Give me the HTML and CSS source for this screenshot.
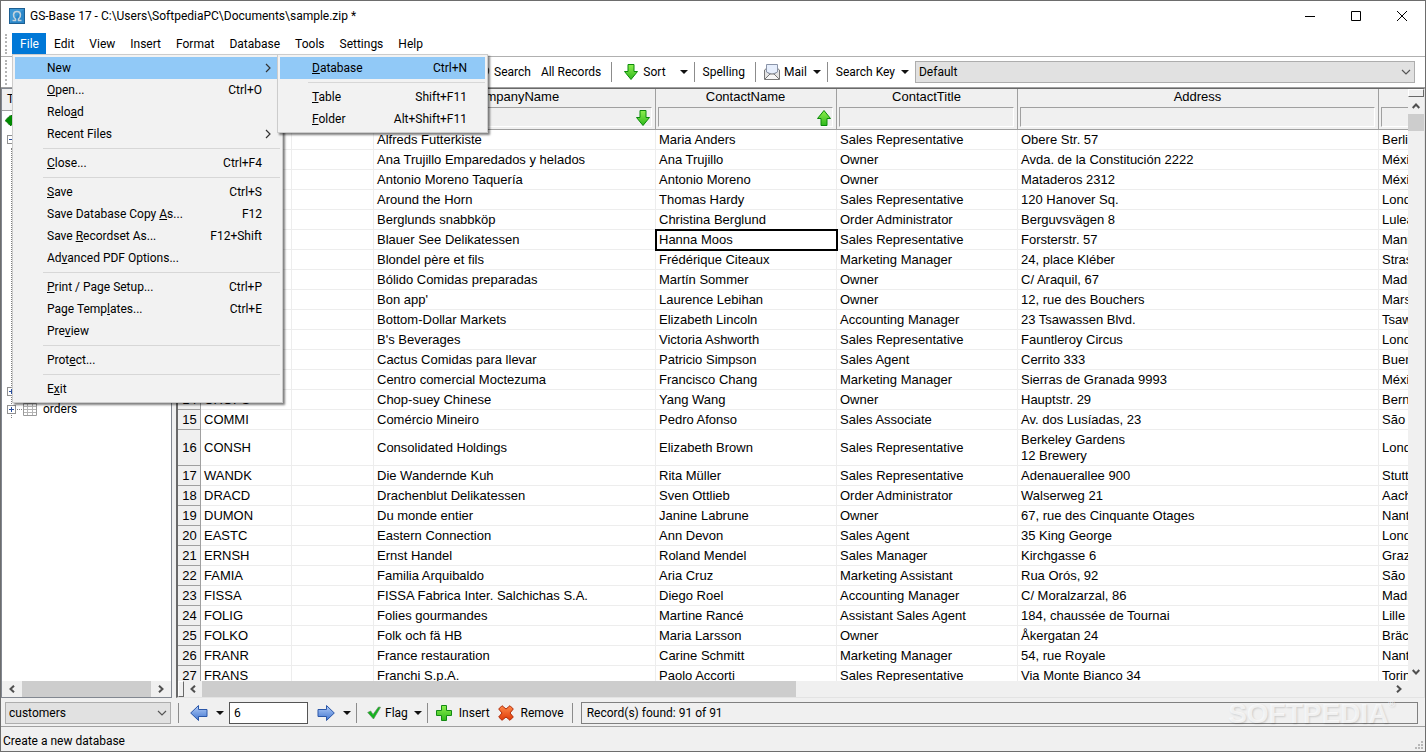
FILE: index.html
```html
<!DOCTYPE html>
<html lang="en">
<head>
  <meta charset="UTF-8" />
  <meta name="viewport" content="width=device-width, initial-scale=1" />
  <title>GS-Base 17</title>
  <link rel="stylesheet" href="styles.css">
</head>
<body>

  <!-- shared icons -->
  <svg class="defs" width="0" height="0" aria-hidden="true">
    <defs>
      <linearGradient id="green" x1="0" y1="0" x2="0" y2="1">
        <stop offset="0" stop-color="#8df04e"/><stop offset="1" stop-color="#2fb81c"/>
      </linearGradient>
      <linearGradient id="blue" x1="0" y1="0" x2="0" y2="1">
        <stop offset="0" stop-color="#b3cdf8"/><stop offset="1" stop-color="#3f74cf"/>
      </linearGradient>
      <linearGradient id="red" x1="0" y1="0" x2="0" y2="1">
        <stop offset="0" stop-color="#ff8a4a"/><stop offset="1" stop-color="#e03a06"/>
      </linearGradient>
    </defs>
    <symbol id="arrow-down" viewBox="0 0 16 16">
      <path d="M5 .5h6v7h3.5L8 15.500 1.500 7.500H5z" fill="url(#green)" stroke="#0a8a0a"/>
    </symbol>
    <symbol id="arrow-up" viewBox="0 0 16 16">
      <path d="M5 15.500h6v-7h3.500L8 .5 1.500 8.500H5z" fill="url(#green)" stroke="#0a8a0a"/>
    </symbol>
    <symbol id="caret" viewBox="0 0 8 4"><path d="M0 0h8L4 4z" fill="#111"/></symbol>
    <symbol id="chev-down" viewBox="0 0 10 6"><path d="M1 1l4 4 4-4" fill="none" stroke="#555" stroke-width="1.2"/></symbol>
    <symbol id="chev-right" viewBox="0 0 6 10"><path d="M1 1l4 4-4 4" fill="none" stroke="#333" stroke-width="1.2"/></symbol>
    <symbol id="sb-left" viewBox="0 0 8 8"><path d="M6 .7L2.500 4 6 7.300" fill="none" stroke="#505050" stroke-width="2"/></symbol>
    <symbol id="sb-right" viewBox="0 0 8 8"><path d="M2 .7L5.500 4 2 7.300" fill="none" stroke="#505050" stroke-width="2"/></symbol>
    <symbol id="sb-up" viewBox="0 0 8 8"><path d="M.7 6L4 2.500 7.300 6" fill="none" stroke="#505050" stroke-width="2"/></symbol>
    <symbol id="sb-down" viewBox="0 0 8 8"><path d="M.7 2L4 5.500 7.300 2" fill="none" stroke="#505050" stroke-width="2"/></symbol>
    <symbol id="sheet" viewBox="0 0 14 13">
      <path d="M.5.5h13v12H.5z" fill="#fff" stroke="#9a9a9a"/>
      <path d="M1 3.500h12M1 6.500h12M1 9.500h12M4.500 1v11M9.500 1v11" stroke="#b4b4b4"/>
    </symbol>
  </svg>

  <div class="window">
    <header class="titlebar">
      <svg class="app-icon" width="16" height="16" viewBox="0 0 16 16">
        <rect x=".5" y=".5" width="15" height="15" fill="#2a86c8" stroke="#1d5f92"/>
        <path d="M1 1h14L1 15z" fill="#4aa3dc" opacity=".6"/>
        <path d="M3.500 12.500h3v-1.500C3.500 8.500 3.800 3.500 8 3.500s4.500 5 1.500 7.500v1.500h3" fill="none" stroke="#c3d3dd" stroke-width="1.600"/>
      </svg>
      <span class="caption">GS-Base 17 - C:\Users\SoftpediaPC\Documents\sample.zip *</span>
      <button class="win-btn" aria-label="Minimize"><svg width="10" height="10"><path d="M0 5.500h10" stroke="#000"/></svg></button>
      <button class="win-btn" aria-label="Maximize"><svg width="10" height="10"><path d="M.5.5h9v9h-9z" fill="none" stroke="#000"/></svg></button>
      <button class="win-btn" aria-label="Close"><svg width="10" height="10"><path d="M0 0l10 10M10 0L0 10" stroke="#000"/></svg></button>
    </header>

    <nav class="menubar">
      <div class="menu-root">
        <button class="open">File</button>
        <div class="popup file-menu">
          <button class="item selected"><span>New</span><svg width="6" height="10"><use href="#chev-right"/></svg></button>
          <button class="item"><span><u>O</u>pen...</span><kbd>Ctrl+O</kbd></button>
          <button class="item"><span>Relo<u>a</u>d</span></button>
          <button class="item"><span>Recent Files</span><svg width="6" height="10"><use href="#chev-right"/></svg></button>
          <hr>
          <button class="item"><span><u>C</u>lose...</span><kbd>Ctrl+F4</kbd></button>
          <hr>
          <button class="item"><span><u>S</u>ave</span><kbd>Ctrl+S</kbd></button>
          <button class="item"><span>Save Database Copy <u>A</u>s...</span><kbd>F12</kbd></button>
          <button class="item"><span>Save <u>R</u>ecordset As...</span><kbd>F12+Shift</kbd></button>
          <button class="item"><span>Ad<u>v</u>anced PDF Options...</span></button>
          <hr>
          <button class="item"><span><u>P</u>rint / Page Setup...</span><kbd>Ctrl+P</kbd></button>
          <button class="item"><span>Page Temp<u>l</u>ates...</span><kbd>Ctrl+E</kbd></button>
          <button class="item"><span>Pre<u>v</u>iew</span></button>
          <hr>
          <button class="item"><span>Prot<u>e</u>ct...</span></button>
          <hr>
          <button class="item"><span>E<u>x</u>it</span></button>
        </div>
        <div class="popup new-menu">
          <button class="item selected"><span><u>D</u>atabase</span><kbd>Ctrl+N</kbd></button>
          <hr>
          <button class="item"><span><u>T</u>able</span><kbd>Shift+F11</kbd></button>
          <button class="item"><span><u>F</u>older</span><kbd>Alt+Shift+F11</kbd></button>
        </div>
      </div>
      <button>Edit</button>
      <button>View</button>
      <button>Insert</button>
      <button>Format</button>
      <button>Database</button>
      <button>Tools</button>
      <button>Settings</button>
      <button>Help</button>
    </nav>

    <div class="toolbar">
      <button class="search"><svg width="16" height="16" viewBox="0 0 16 16"><circle cx="9" cy="7" r="5.500" fill="#eee" stroke="#444" stroke-width="1.500"/><path d="M5 11l-4 4" stroke="#444" stroke-width="2"/></svg>Search</button>
      <button>All Records</button>
      <span class="sep"></span>
      <button class="sort"><svg width="16" height="16"><use href="#arrow-down"/></svg>Sort</button>
      <button class="drop" aria-label="Sort options"><svg width="8" height="4"><use href="#caret"/></svg></button>
      <span class="sep"></span>
      <button>Spelling</button>
      <span class="sep"></span>
      <button class="split-btn"><svg width="16" height="16" viewBox="0 0 16 16">
        <path d="M.5 6L3 4v4l5 3 5-3V4l2.500 2v9.500H.5z" fill="#e4e4e4" stroke="#777"/>
        <path d="M2.500.5h11v7.500L8 10.500 2.500 8z" fill="#e6eefc" stroke="#8a94a8"/>
        <path d="M1 15l5-5h4l5 5" fill="#f6f6f6" stroke="#777"/>
      </svg>Mail</button>
      <button class="drop" aria-label="Mail options"><svg width="8" height="4"><use href="#caret"/></svg></button>
      <span class="sep"></span>
      <button class="split-btn">Search Key</button>
      <button class="drop" aria-label="Search key options"><svg width="8" height="4"><use href="#caret"/></svg></button>
      <div class="combo key-combo">
        <select aria-label="Search key"><option>Default</option></select>
        <svg width="10" height="6"><use href="#chev-down"/></svg>
      </div>
    </div>

    <main class="work">
      <aside class="tree-pane">
        <div class="tree-head">T</div>
        <div class="tree">
          <svg class="diamond" width="13" height="13" viewBox="0 0 13 13"><path d="M0 6.500L5 1.500h8v10H5z" fill="#008a00" stroke="#0a5a0a" stroke-dasharray="1 1"/></svg>
          <div class="node"><span class="box minus"></span></div>
          <div class="branch">
            <div class="node"><span class="box"></span><span class="twig"></span><svg width="14" height="13"><use href="#sheet"/></svg></div>
            <div class="node"><span class="box"></span><span class="twig"></span><svg width="14" height="13"><use href="#sheet"/></svg>orders</div>
          </div>
        </div>
        <div class="hscroll">
          <svg width="8" height="8"><use href="#sb-left"/></svg>
          <span class="thumb"></span>
          <svg width="8" height="8"><use href="#sb-right"/></svg>
        </div>
      </aside>

      <section class="grid-pane">
        <div class="grid-body">
          <div class="grid-view">
            <table>
              <colgroup>
                <col class="c-num"><col class="c-id"><col class="c-blank"><col class="c-company"><col class="c-contact"><col class="c-title"><col class="c-address"><col class="c-city">
              </colgroup>
              <thead>
                <tr>
                  <th></th>
                  <th><input aria-label="Filter 1"></th>
                  <th><input aria-label="Filter 2"></th>
                  <th>CompanyName<input aria-label="Filter CompanyName"><svg class="dir" width="16" height="16"><use href="#arrow-down"/></svg></th>
                  <th>ContactName<input aria-label="Filter ContactName"><svg class="dir" width="16" height="16"><use href="#arrow-up"/></svg></th>
                  <th>ContactTitle<input aria-label="Filter ContactTitle"></th>
                  <th>Address<input aria-label="Filter Address"></th>
                  <th><input aria-label="Filter 7"></th>
                </tr>
              </thead>
              <tbody>
                <tr><th>1</th><td></td><td></td><td>Alfreds Futterkiste</td><td>Maria Anders</td><td>Sales Representative</td><td>Obere Str. 57</td><td>Berlin</td></tr>
                <tr><th>2</th><td></td><td></td><td>Ana Trujillo Emparedados y helados</td><td>Ana Trujillo</td><td>Owner</td><td>Avda. de la Constitución 2222</td><td>México</td></tr>
                <tr><th>3</th><td></td><td></td><td>Antonio Moreno Taquería</td><td>Antonio Moreno</td><td>Owner</td><td>Mataderos 2312</td><td>México</td></tr>
                <tr><th>4</th><td></td><td></td><td>Around the Horn</td><td>Thomas Hardy</td><td>Sales Representative</td><td>120 Hanover Sq.</td><td>London</td></tr>
                <tr><th>5</th><td></td><td></td><td>Berglunds snabbköp</td><td>Christina Berglund</td><td>Order Administrator</td><td>Berguvsvägen 8</td><td>Luleå</td></tr>
                <tr><th>6</th><td></td><td></td><td>Blauer See Delikatessen</td><td class="current">Hanna Moos</td><td>Sales Representative</td><td>Forsterstr. 57</td><td>Mannheim</td></tr>
                <tr><th>7</th><td></td><td></td><td>Blondel père et fils</td><td>Frédérique Citeaux</td><td>Marketing Manager</td><td>24, place Kléber</td><td>Strasbourg</td></tr>
                <tr><th>8</th><td></td><td></td><td>Bólido Comidas preparadas</td><td>Martín Sommer</td><td>Owner</td><td>C/ Araquil, 67</td><td>Madrid</td></tr>
                <tr><th>9</th><td></td><td></td><td>Bon app'</td><td>Laurence Lebihan</td><td>Owner</td><td>12, rue des Bouchers</td><td>Marseille</td></tr>
                <tr><th>10</th><td></td><td></td><td>Bottom-Dollar Markets</td><td>Elizabeth Lincoln</td><td>Accounting Manager</td><td>23 Tsawassen Blvd.</td><td>Tsawassen</td></tr>
                <tr><th>11</th><td></td><td></td><td>B's Beverages</td><td>Victoria Ashworth</td><td>Sales Representative</td><td>Fauntleroy Circus</td><td>London</td></tr>
                <tr><th>12</th><td></td><td></td><td>Cactus Comidas para llevar</td><td>Patricio Simpson</td><td>Sales Agent</td><td>Cerrito 333</td><td>Buenos</td></tr>
                <tr><th>13</th><td></td><td></td><td>Centro comercial Moctezuma</td><td>Francisco Chang</td><td>Marketing Manager</td><td>Sierras de Granada 9993</td><td>México</td></tr>
                <tr><th>14</th><td>CHOPS</td><td></td><td>Chop-suey Chinese</td><td>Yang Wang</td><td>Owner</td><td>Hauptstr. 29</td><td>Bern</td></tr>
                <tr><th>15</th><td>COMMI</td><td></td><td>Comércio Mineiro</td><td>Pedro Afonso</td><td>Sales Associate</td><td>Av. dos Lusíadas, 23</td><td>São Paulo</td></tr>
                <tr class="tall"><th>16</th><td>CONSH</td><td></td><td>Consolidated Holdings</td><td>Elizabeth Brown</td><td>Sales Representative</td><td>Berkeley Gardens<br>12 Brewery</td><td>London</td></tr>
                <tr><th>17</th><td>WANDK</td><td></td><td>Die Wandernde Kuh</td><td>Rita Müller</td><td>Sales Representative</td><td>Adenauerallee 900</td><td>Stuttgart</td></tr>
                <tr><th>18</th><td>DRACD</td><td></td><td>Drachenblut Delikatessen</td><td>Sven Ottlieb</td><td>Order Administrator</td><td>Walserweg 21</td><td>Aachen</td></tr>
                <tr><th>19</th><td>DUMON</td><td></td><td>Du monde entier</td><td>Janine Labrune</td><td>Owner</td><td>67, rue des Cinquante Otages</td><td>Nantes</td></tr>
                <tr><th>20</th><td>EASTC</td><td></td><td>Eastern Connection</td><td>Ann Devon</td><td>Sales Agent</td><td>35 King George</td><td>London</td></tr>
                <tr><th>21</th><td>ERNSH</td><td></td><td>Ernst Handel</td><td>Roland Mendel</td><td>Sales Manager</td><td>Kirchgasse 6</td><td>Graz</td></tr>
                <tr><th>22</th><td>FAMIA</td><td></td><td>Familia Arquibaldo</td><td>Aria Cruz</td><td>Marketing Assistant</td><td>Rua Orós, 92</td><td>São Paulo</td></tr>
                <tr><th>23</th><td>FISSA</td><td></td><td>FISSA Fabrica Inter. Salchichas S.A.</td><td>Diego Roel</td><td>Accounting Manager</td><td>C/ Moralzarzal, 86</td><td>Madrid</td></tr>
                <tr><th>24</th><td>FOLIG</td><td></td><td>Folies gourmandes</td><td>Martine Rancé</td><td>Assistant Sales Agent</td><td>184, chaussée de Tournai</td><td>Lille</td></tr>
                <tr><th>25</th><td>FOLKO</td><td></td><td>Folk och fä HB</td><td>Maria Larsson</td><td>Owner</td><td>Åkergatan 24</td><td>Bräcke</td></tr>
                <tr><th>26</th><td>FRANR</td><td></td><td>France restauration</td><td>Carine Schmitt</td><td>Marketing Manager</td><td>54, rue Royale</td><td>Nantes</td></tr>
                <tr><th>27</th><td>FRANS</td><td></td><td>Franchi S.p.A.</td><td>Paolo Accorti</td><td>Sales Representative</td><td>Via Monte Bianco 34</td><td>Torino</td></tr>
              </tbody>
            </table>
          </div>
          <div class="vscroll">
            <span class="split"></span>
            <svg width="8" height="8"><use href="#sb-up"/></svg>
            <span class="thumb"></span>
            <svg width="8" height="8"><use href="#sb-down"/></svg>
          </div>
        </div>
        <div class="hscroll">
          <span class="split"></span>
          <svg width="8" height="8"><use href="#sb-left"/></svg>
          <span class="track"><span class="thumb"></span></span>
          <svg width="8" height="8"><use href="#sb-right"/></svg>
        </div>
      </section>
    </main>

    <div class="recordbar">
      <div class="combo table-combo">
        <select aria-label="Table"><option>customers</option></select>
        <svg width="10" height="6"><use href="#chev-down"/></svg>
      </div>
      <span class="sep"></span>
      <button class="step" aria-label="Previous"><svg width="18" height="16" viewBox="0 0 18 16"><path d="M8.500.5v4h8.500v7H8.500v4L.7 8z" fill="url(#blue)" stroke="#2a56a8"/></svg></button>
      <button class="drop" aria-label="Previous options"><svg width="8" height="4"><use href="#caret"/></svg></button>
      <input type="text" class="recno" value="6" aria-label="Record number">
      <button class="step" aria-label="Next"><svg width="18" height="16" viewBox="0 0 18 16"><path d="M9.500.5v4H1v7h8.500v4L17.300 8z" fill="url(#blue)" stroke="#2a56a8"/></svg></button>
      <button class="drop" aria-label="Next options"><svg width="8" height="4"><use href="#caret"/></svg></button>
      <span class="sep"></span>
      <button class="split-btn"><svg width="16" height="14" viewBox="0 0 16 14"><path d="M2.700 6.500l3-1.500L8 8.500 13.500 1l2 .3L8.500 13z" fill="#12b51c" stroke="#5c8a5c" stroke-width=".7"/></svg>Flag</button>
      <button class="drop" aria-label="Flag options"><svg width="8" height="4"><use href="#caret"/></svg></button>
      <span class="sep"></span>
      <button class="action"><svg width="16" height="16" viewBox="0 0 16 16"><path d="M5.500.5h5v5h5v5h-5v5h-5v-5h-5v-5h5z" fill="url(#green)" stroke="#148a14"/></svg>Insert</button>
      <button class="action"><svg width="16" height="16" viewBox="0 0 16 16"><path d="M4 .7L8 4l4-3.300L15.300 4 12 8l3.300 4-3.300 3.300L8 12l-4 3.300L.7 12 4 8 .7 4z" fill="url(#red)" stroke="#b02a08"/></svg>Remove</button>
      <span class="sep"></span>
      <output class="found">Record(s) found: 91 of 91</output>
      <div class="watermark">SOFTPEDIA<sup>®</sup></div>
    </div>

    <footer class="statusbar">
      <span>Create a new database</span>
      <svg width="10" height="10" fill="#b8b8b8"><path d="M7 0h2v2H7zM4 3h2v2H4zM7 3h2v2H7zM1 6h2v2H1zM4 6h2v2H4zM7 6h2v2H7z"/></svg>
    </footer>
  </div>
</body>
</html>
```
FILE: styles.css
```css
* {
  box-sizing: border-box;
}
html, body {
  margin: 0;
  height: 100%;
}
body {
  font-family: Roboto, "Open Sans", sans-serif;
  font-size: 12px;
  line-height: 16px;
  color: #000;
  background: #fff;
}
button, input, select {
  font: inherit;
  color: inherit;
  margin: 0;
  border: 0;
  border-radius: 0;
  background: none;
}
button {
  padding: 0;
  white-space: nowrap;
}
svg {
  display: block;
  flex: none;
}
.defs {
  position: absolute;
}

.window {
  height: 100vh;
  display: flex;
  flex-direction: column;
  border: 1px solid #6d6d6d;
  overflow: hidden;
}

/* Title bar */
.titlebar {
  display: flex;
  align-items: center;
  height: 30px;
  padding-left: 8px;
  flex: none;
}
.caption {
  flex: 1;
  margin-left: 5px;
}
.win-btn {
  width: 46px;
  height: 28px;
  display: flex;
  align-items: center;
  justify-content: center;
}

/* Menu bar */
.menubar {
  display: flex;
  height: 26px;
  padding: 2px 0 3px 11px;
  border-bottom: 1px solid #b0b0b0;
  position: relative;
  flex: none;
}
.menubar::before, .toolbar::before {
  content: "";
  position: absolute;
  left: 4px;
  top: 3px;
  bottom: 2px;
  border-left: 2px dotted #b4b4b4;
}
.menubar > button, .menu-root > button {
  height: 21px;
  padding: 0 7px 0 8px;
}
.menu-root {
  position: relative;
}
.menu-root > .open {
  width: 34px;
  background: #0078d7;
  color: #fff;
}

/* Popup menus */
.popup {
  position: absolute;
  top: 21px;
  z-index: 10;
  padding: 2px;
  background: #f2f2f2;
  border: 1px solid #ccc;
  box-shadow: 2px 2px 2px rgba(0,0,0,0.5);
}
.file-menu {
  left: 0;
  width: 271px;
}
.new-menu {
  left: 265px;
  width: 211px;
}
.item {
  display: flex;
  align-items: center;
  justify-content: space-between;
  width: 100%;
  height: 22px;
  padding: 0 18px 0 32px;
}
.item svg {
  margin-right: -9px;
}
.item kbd {
  font: inherit;
}
.item.selected {
  background: #91c9f7;
}
.popup hr {
  margin: 3px 0 3px 28px;
  border: 0;
  border-top: 1px solid #d7d7d7;
}

/* Toolbars */
.toolbar {
  display: flex;
  align-items: center;
  height: 30px;
  padding: 0 10px 0 473px;
  position: relative;
  flex: none;
}
.toolbar button, .recordbar button {
  display: flex;
  align-items: center;
  gap: 4px;
  margin-right: 10px;
}
.toolbar .sort {
  margin-left: 3px;
  margin-right: 14px;
}
.toolbar .split-btn, .recordbar .split-btn {
  margin-right: 6px;
}
.toolbar .drop {
  margin-right: 6px;
}
.sep {
  width: 1px;
  height: 20px;
  margin-right: 8px;
  background: #8c8c8c;
  flex: none;
}
.combo {
  position: relative;
}
.combo select {
  appearance: none;
  display: block;
  width: 100%;
  height: 22px;
  padding: 0 3px;
  background: #e1e1e1;
  border: 1px solid #adadad;
}
.combo svg {
  position: absolute;
  right: 4px;
  top: 8px;
  pointer-events: none;
}
.key-combo {
  flex: 1;
}

/* Work area */
.work {
  flex: 1;
  display: flex;
  min-height: 0;
  gap: 4px;
  background: #f0f0f0;
  border-top: 1px solid #a0a0a0;
}
.tree-pane {
  width: 171px;
  display: flex;
  flex-direction: column;
  flex: none;
  background: #fff;
  border: 1px solid #828790;
}
.tree-head {
  height: 22px;
  padding: 2px 5px;
  background: #f0f0f0;
  border-bottom: 1px solid #a0a0a0;
}
.tree {
  flex: 1;
  min-height: 0;
}
.diamond {
  margin: 3px 0 3px 3px;
}
.node {
  display: flex;
  align-items: center;
  height: 18px;
  padding-left: 5px;
}
.node svg {
  margin-right: 6px;
}
.twig {
  width: 5px;
  margin: 0 1px;
  border-top: 1px dotted #808080;
}
.box {
  position: relative;
  width: 9px;
  height: 9px;
  border: 1px solid #919191;
  background: #fff;
}
.box::before, .box::after {
  content: "";
  position: absolute;
  left: 1px;
  top: 3px;
  width: 5px;
  height: 1px;
  background: #2b4f9c;
}
.box::after {
  left: 3px;
  top: 1px;
  width: 1px;
  height: 5px;
}
.box.minus::after {
  display: none;
}
.branch {
  margin-left: 9px;
  padding-top: 234px;
  border-left: 1px dotted #808080;
}
.branch .node {
  padding: 0;
  margin-left: -5px;
}

/* Data grid */
.grid-pane {
  flex: 1;
  min-width: 0;
  display: flex;
  flex-direction: column;
  border: 1px solid #696969;
  border-left-width: 2px;
  border-right-color: #e3e3e3;
  border-bottom-color: #e3e3e3;
}
.grid-body {
  flex: 1;
  display: flex;
  min-height: 0;
}
.grid-view {
  flex: 1;
  min-width: 0;
  overflow: hidden;
  background: #fff;
}
table {
  width: 1260px;
  table-layout: fixed;
  border-collapse: separate;
  border-spacing: 0;
  font-family: "Liberation Sans", Arial, sans-serif;
  font-size: 13px;
}
.c-num { width: 23px; }
.c-id { width: 91px; }
.c-blank { width: 82px; }
.c-company { width: 282px; }
.c-contact, .c-title { width: 181px; }
.c-address { width: 361px; }
.c-city { width: 59px; }

th {
  font-weight: normal;
  background: #f0f0f0;
  border-right: 1px solid #a0a0a0;
  border-bottom: 1px solid #a0a0a0;
}
thead th {
  position: relative;
  height: 41px;
  padding: 0 3px 2px 2px;
  vertical-align: bottom;
}
thead input {
  display: block;
  width: 100%;
  height: 20px;
  margin-top: 2px;
  background: #f0f0f0;
  border: 1px solid #a0a0a0;
  border-right-color: #fff;
  border-bottom-color: #fff;
}
.dir {
  position: absolute;
  right: 4px;
  bottom: 3px;
}
tbody th {
  padding: 0 0 0 1px;
}
td {
  height: 20px;
  padding: 0 3px;
  white-space: nowrap;
  border-right: 1px solid #ededed;
  border-bottom: 1px solid #ededed;
}
.tall td {
  height: 36px;
}
.current {
  outline: 2px solid #000;
  outline-offset: -1px;
}

/* Scroll bars */
.hscroll, .vscroll {
  display: flex;
  align-items: center;
  background: #f0f0f0;
  flex: none;
}
.hscroll {
  height: 16px;
}
.vscroll {
  flex-direction: column;
  width: 16px;
  padding-bottom: 5px;
}
.thumb {
  background: #cdcdcd;
}
.tree-pane .hscroll {
  padding: 0 6px;
  gap: 6px;
}
.tree-pane .thumb {
  flex: 1;
  height: 16px;
}
.grid-pane .hscroll {
  gap: 5px;
  padding-right: 21px;
}
.track {
  flex: 1;
}
.track .thumb {
  display: block;
  width: 50%;
  height: 16px;
}
.vscroll .thumb {
  width: 16px;
  height: 17px;
  margin: 4px 0 auto;
}
.split {
  border: 1px solid #fff;
  border-right-color: #696969;
  border-bottom-color: #696969;
}
.vscroll .split {
  width: 16px;
  height: 8px;
  margin-bottom: 5px;
}
.hscroll .split {
  width: 6px;
  height: 16px;
}

/* Record bar */
.recordbar {
  display: flex;
  align-items: center;
  height: 29px;
  padding: 1px 7px 0 4px;
  background: #f0f0f0;
  border-bottom: 1px solid #a0a0a0;
  position: relative;
  flex: none;
}
.table-combo {
  width: 166px;
  margin-right: 7px;
}
.recordbar .step {
  margin: 0 8px 0 3px;
}
.recordbar .drop {
  margin-right: 5px;
}
.recordbar .action {
  gap: 7px;
  margin-right: 8px;
}
.recno {
  width: 79px;
  height: 22px;
  margin-right: 6px;
  padding: 0 4px;
  background: #fff;
  border: 1px solid #555;
}
.found {
  flex: 1;
  height: 22px;
  padding: 2px 5px;
  border: 1px solid #808080;
}
.watermark {
  position: absolute;
  right: 30px;
  top: 2px;
  font: bold 28px/28px "Liberation Sans", Arial, sans-serif;
  color: rgba(255,255,255,0.7);
  text-shadow: 1px 1px 2px rgba(0,0,0,0.15);
  pointer-events: none;
}
.watermark sup {
  font-size: 9px;
  line-height: 9px;
  vertical-align: top;
}

/* Status bar */
.statusbar {
  display: flex;
  align-items: center;
  justify-content: space-between;
  height: 24px;
  padding: 3px 1px 0 2px;
  background: #f0f0f0;
  flex: none;
}
.statusbar svg {
  align-self: flex-end;
}
```
